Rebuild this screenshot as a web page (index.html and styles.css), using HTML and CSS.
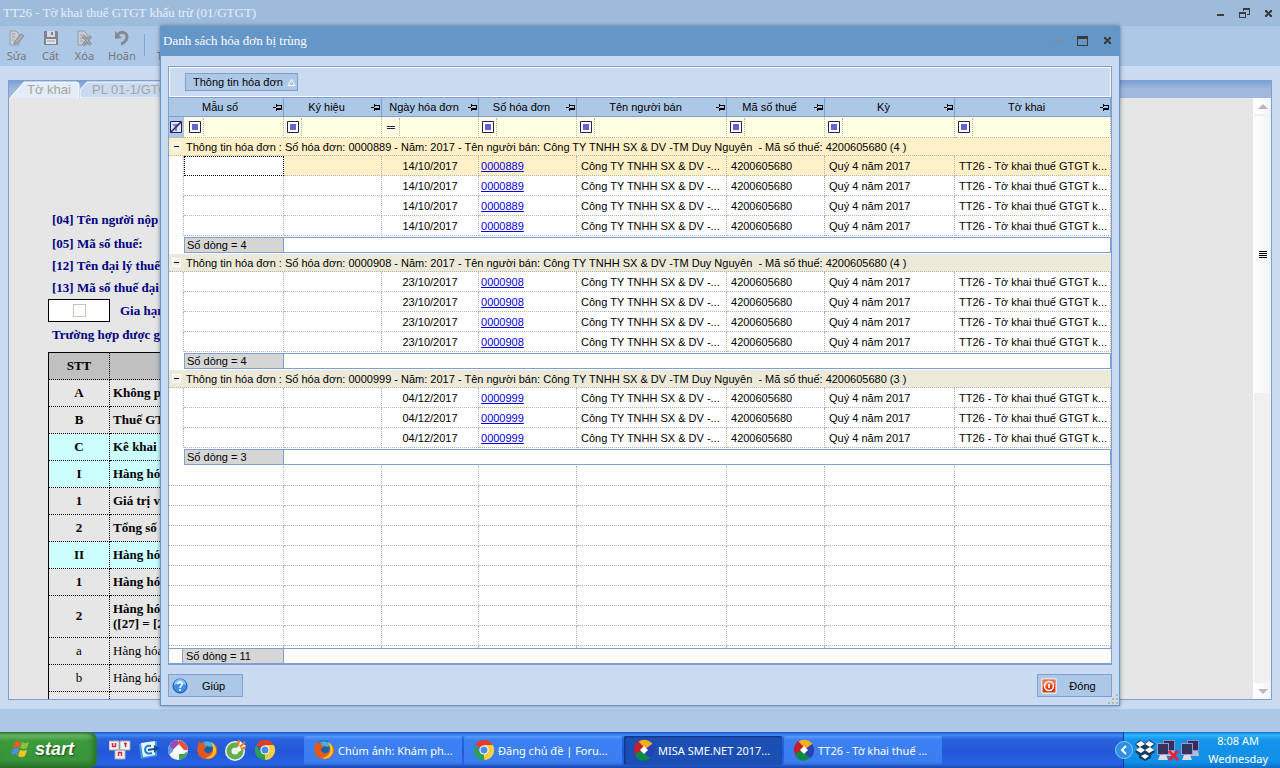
FILE: index.html
```
<!DOCTYPE html>
<html lang="vi">
<head>
    <meta charset="UTF-8">
    <title>TT26 - Tờ khai thuế GTGT khấu trừ (01/GTGT)</title>
    <link rel="stylesheet" href="styles.css">
</head>
<body>

<!-- Biểu tượng dùng chung -->
<svg class="defs" width="0" height="0" aria-hidden="true">
    <symbol id="pin" viewBox="0 0 9 7"><path d="M0 3h4v1H0zM3 0h1v7H3zM4 1h5v5H4zM4 2v2h4V2z" fill-rule="evenodd"/></symbol>
    <symbol id="op" viewBox="0 0 12 12"><path d="M.5.5h11v11H.5z" fill="#fff" stroke="#20205a"/><path d="M3 3h6v6H3z" fill="#6464cc"/></symbol>
    <symbol id="firefox" viewBox="0 0 20 20">
        <circle cx="10" cy="9" r="8.500" fill="#1a5fa8"/>
        <path d="M5 3c2-2 8-3 11 1l-2 3-4-1-2 1z" fill="#3fb4e0"/>
        <path d="M1 5c0-2 1-3 1-4l2 2 4 0-1 2 3 1c0 2-3 1-3 4 1 4 6 4 8 1 2-2 1-5 0-7 2 1 2 2 3 3 0-2-1-3-2-4 5 3 6 9 2 13C13 21 4 20 1 14c-1-3-1-6 0-9z" fill="#e2581e"/>
        <path d="M14 2c6 3 7 11 2 15-3 2-6 2-8 1 5-1 8-4 8-8 0-3-1-6-2-8z" fill="#fbc02d"/>
    </symbol>
    <symbol id="chrome" viewBox="0 0 20 20">
        <path d="M10 10 1.300 5A10 10 0 0 1 18.700 5z" fill="#e33b2e"/>
        <path d="M10 10V5h8.700A10 10 0 0 1 10 20l4.300-7.500z" fill="#fdd23c"/>
        <path d="M10 10 10 20A10 10 0 0 1 1.300 5l4.400 7.500z" fill="#2da14c"/>
        <path d="M10 20 5.700 12.500h8.600z" fill="#2da14c"/>
        <path d="m10 20 4.300-7.500L10 10z" fill="#fdd23c"/>
        <circle cx="10" cy="10" r="4.600" fill="#fff"/><circle cx="10" cy="10" r="3.500" fill="#4a8af4"/>
    </symbol>
    <symbol id="misa" viewBox="0 0 22 22">
        <path d="M11 11 5 3Q12-2 19 4v5z" fill="#f3b01c"/>
        <path d="M11 11 3 17Q-2 9 5 2l5 5z" fill="#c31f2d"/>
        <path d="M11 11l6 8Q9 25 3 18v-4z" fill="#0a8a45"/>
        <path d="M11 11l8-6q5 7-1 14l-5-3z" fill="#2a3fb8"/>
        <path d="m11 7 4 4-4 4-4-4z" fill="#fff"/>
    </symbol>
    <symbol id="net" viewBox="0 0 19 21">
        <path d="M6 0h12v11H6z" fill="#8f8fc0"/><path d="M7 1h10v9H7z" fill="#2f2f5c"/>
        <path d="M9 11h8l1 5H9z" fill="#b9b9d3"/>
        <path d="M0 3h12v12H0z" fill="#9a9ac8"/><path d="M1 4h10v10H1z" fill="#34345f"/>
        <path d="M3 15h6l2 5H1z" fill="#dcdce8"/>
    </symbol>
</svg>

<div class="desktop">

    <!-- Cửa sổ tờ khai -->
    <div class="main-window">
        <div class="title-bar">
            <span class="title">TT26 - Tờ khai thuế GTGT khấu trừ (01/GTGT)</span>
            <div class="window-buttons">
                <button aria-label="Thu nhỏ"><svg width="11" height="11"><path d="M2 6h7v2H2z"/></svg></button>
                <button aria-label="Khôi phục"><svg width="11" height="11"><path d="M4 0h7v7H8V6h2V2H5v1H4zM0 4h7v6H0zM1 6v3h5V6z" fill-rule="evenodd"/></svg></button>
                <button aria-label="Đóng cửa sổ"><svg width="11" height="11"><path d="m3 3 5 5M8 3 3 8" stroke="#3c3c3c" stroke-width="2"/><path d="M2 2h2v2H2zM7 2h2v2H7zM2 7h2v2H2zM7 7h2v2H7z"/></svg></button>
            </div>
        </div>

        <div class="toolbar">
            <button class="tool"><svg width="18" height="18" viewBox="0 0 18 18"><path d="M2 2h6l3 3v11H2z" fill="#c8cdd3" stroke="#969ca3"/><path d="M4 5h3M4 8h3M4 11h2" stroke="#9ba0a7"/><path d="m7 12 6-7 3 2-6 7-4 1z" fill="#a9aeb5" stroke="#868b92"/></svg>Sửa</button>
            <button class="tool"><svg width="18" height="18" viewBox="0 0 18 18"><path d="M2 2h13l1 1v13H2z" fill="#7d8590"/><path d="M5 2h8v6H5z" fill="#d3d9e0"/><path d="M9 3h2v3H9z" fill="#7d8590"/><path d="M4 10h10v5H4z" fill="#dfe3e8"/><path d="M5 12h8" stroke="#9aa0a7"/></svg>Cất</button>
            <button class="tool"><svg width="18" height="18" viewBox="0 0 18 18"><path d="M2 2h6l3 3v11H2z" fill="#c8cdd3" stroke="#969ca3"/><path d="M4 6h4M4 9h4M4 12h3" stroke="#9ba0a7"/><path d="m7 7 8 9M15 7l-8 9" stroke="#858a91" stroke-width="3"/><path d="m7 7 8 9M15 7l-8 9" stroke="#b8bdc4"/></svg>Xóa</button>
            <button class="tool"><svg width="18" height="18" viewBox="0 0 18 18"><path d="M4 6c5-5 10-2 10 2 0 3-3 6-6 7" fill="none" stroke="#858b94" stroke-width="3"/><path d="M2 2v8l7-1z" fill="#858b94"/></svg>Hoãn</button>
            <span class="tool-separator"></span>
            <button class="tool tool-last">Thêm</button>
        </div>

        <div class="document">
            <div class="tabs">
                <a class="tab" href="#to-khai"><svg width="71" height="17" viewBox="0 0 71 17"><path d="M1 17 15 1h52q3 0 3 3v13" fill="#e4ecf8" stroke="#fff"/></svg><span>Tờ khai</span></a>
                <a class="tab" href="#phu-luc"><svg width="110" height="17" viewBox="0 0 110 17"><path d="M0 9 7 1h99q3 0 3 3v13H0z" fill="#c9daf1" stroke="#fff"/></svg><span>PL 01-1/GTGT</span></a>
            </div>
            <div class="page">
                <div class="form" id="to-khai">
                    <p>[04] Tên người nộp</p>
                    <p>[05] Mã số thuế:</p>
                    <p>[12] Tên đại lý thuế</p>
                    <p>[13] Mã số thuế đại</p>
                    <label class="extend"><span class="check-box"><input type="checkbox"></span>Gia hạn</label>
                    <p class="case">Trường hợp được gia</p>
                    <table class="form-table">
                        <tr><th>STT</th><th></th></tr>
                        <tr><td>A</td><td>Không p</td></tr>
                        <tr><td>B</td><td>Thuế GTGT</td></tr>
                        <tr class="section"><td>C</td><td>Kê khai</td></tr>
                        <tr class="section"><td>I</td><td>Hàng hóa</td></tr>
                        <tr><td>1</td><td>Giá trị và</td></tr>
                        <tr><td>2</td><td>Tổng số</td></tr>
                        <tr class="section"><td>II</td><td>Hàng hóa</td></tr>
                        <tr><td>1</td><td>Hàng hóa</td></tr>
                        <tr class="double"><td>2</td><td>Hàng hóa<br>([27] = [29]</td></tr>
                        <tr class="plain"><td>a</td><td>Hàng hóa</td></tr>
                        <tr class="plain"><td>b</td><td>Hàng hóa</td></tr>
                        <tr class="plain"><td></td><td></td></tr>
                    </table>
                </div>
                <div class="scrollbar">
                    <span class="arrow up"></span>
                    <span class="thumb"><i></i></span>
                    <span class="arrow down"></span>
                </div>
            </div>
        </div>
        <div class="status-bar"></div>
    </div>

    <!-- Hộp thoại hóa đơn trùng -->
    <div class="dialog" role="dialog" aria-labelledby="dialogTitle">
        <div class="title-bar">
            <span class="title" id="dialogTitle">Danh sách hóa đơn bị trùng</span>
            <div class="window-buttons">
                <button aria-label="Thu nhỏ" disabled><svg width="11" height="11"><path d="M2 5h7v2H2z"/></svg></button>
                <button aria-label="Phóng to"><svg width="11" height="11"><path d="M0 0h11v10H0zM1 3v6h9V3z" fill-rule="evenodd"/></svg></button>
                <button aria-label="Đóng hộp thoại"><svg width="11" height="11"><path d="m3 2 5 5M8 2 3 7" stroke="#3c3c3c" stroke-width="2"/><path d="M2 1h2v2H2zM7 1h2v2H7zM2 6h2v2H2zM7 6h2v2H7z"/></svg></button>
            </div>
        </div>

        <div class="grid">
            <div class="group-by">
                <button>Thông tin hóa đơn<svg width="9" height="9"><path d="M4.500 1.500 8 7.500H1z" fill="none" stroke="#fff"/></svg></button>
            </div>
            <div class="grid-body">
                <table class="invoices">
                    <colgroup>
                        <col class="w-indent"><col class="w-mau"><col class="w-98"><col class="w-97"><col class="w-98"><col class="w-150"><col class="w-98"><col class="w-130"><col>
                    </colgroup>
                    <thead>
                        <tr class="head">
                            <th colspan="2"><div>Mẫu số<svg width="9" height="7"><use href="#pin"/></svg></div></th>
                            <th><div>Ký hiệu<svg width="9" height="7"><use href="#pin"/></svg></div></th>
                            <th><div>Ngày hóa đơn<svg width="9" height="7"><use href="#pin"/></svg></div></th>
                            <th><div>Số hóa đơn<svg width="9" height="7"><use href="#pin"/></svg></div></th>
                            <th><div>Tên người bán<svg width="9" height="7"><use href="#pin"/></svg></div></th>
                            <th><div>Mã số thuế<svg width="9" height="7"><use href="#pin"/></svg></div></th>
                            <th><div>Kỳ<svg width="9" height="7"><use href="#pin"/></svg></div></th>
                            <th><div>Tờ khai<svg width="9" height="7"><use href="#pin"/></svg></div></th>
                        </tr>
                        <tr class="filter">
                            <td class="clear"><button aria-label="Xóa lọc"><svg width="12" height="12" viewBox="0 0 12 12"><path d="M.5.5h11v11H.5z" fill="#dfe6fa" stroke="#20205a"/><path d="M2 3h8L7 6v4H5V6z" fill="#8080d8"/><path d="M1 11 11 1" stroke="#20205a" stroke-width="1.500"/></svg></button></td>
                            <td><div><button aria-label="Điều kiện lọc"><svg width="12" height="12"><use href="#op"/></svg></button><input type="text" aria-label="Lọc mẫu số"></div></td>
                            <td><div><button aria-label="Điều kiện lọc"><svg width="12" height="12"><use href="#op"/></svg></button><input type="text" aria-label="Lọc ký hiệu"></div></td>
                            <td><div><button aria-label="Điều kiện lọc"><svg width="12" height="12"><path d="M2 5h8v1H2zM2 7h8v1H2z" fill="#20205a"/></svg></button><input type="text" aria-label="Lọc ngày hóa đơn"></div></td>
                            <td><div><button aria-label="Điều kiện lọc"><svg width="12" height="12"><use href="#op"/></svg></button><input type="text" aria-label="Lọc số hóa đơn"></div></td>
                            <td><div><button aria-label="Điều kiện lọc"><svg width="12" height="12"><use href="#op"/></svg></button><input type="text" aria-label="Lọc tên người bán"></div></td>
                            <td><div><button aria-label="Điều kiện lọc"><svg width="12" height="12"><use href="#op"/></svg></button><input type="text" aria-label="Lọc mã số thuế"></div></td>
                            <td><div><button aria-label="Điều kiện lọc"><svg width="12" height="12"><use href="#op"/></svg></button><input type="text" aria-label="Lọc kỳ"></div></td>
                            <td><div><button aria-label="Điều kiện lọc"><svg width="12" height="12"><use href="#op"/></svg></button><input type="text" aria-label="Lọc tờ khai"></div></td>
                        </tr>
                    </thead>
                    <tbody>
                        <tr class="group active"><td colspan="9"><div><button aria-label="Thu gọn nhóm"></button>Thông tin hóa đơn : Số hóa đơn: 0000889 - Năm: 2017 - Tên người bán: Công TY TNHH SX &amp; DV -TM Duy Nguyên  - Mã số thuế: 4200605680 (4 )</div></td></tr>
                        <tr class="active"><td></td><td class="focused"></td><td></td><td>14/10/2017</td><td><a href="#">0000889</a></td><td>Công TY TNHH SX &amp; DV -...</td><td>4200605680</td><td>Quý 4 năm 2017</td><td>TT26 - Tờ khai thuế GTGT k...</td></tr>
                        <tr><td></td><td></td><td></td><td>14/10/2017</td><td><a href="#">0000889</a></td><td>Công TY TNHH SX &amp; DV -...</td><td>4200605680</td><td>Quý 4 năm 2017</td><td>TT26 - Tờ khai thuế GTGT k...</td></tr>
                        <tr><td></td><td></td><td></td><td>14/10/2017</td><td><a href="#">0000889</a></td><td>Công TY TNHH SX &amp; DV -...</td><td>4200605680</td><td>Quý 4 năm 2017</td><td>TT26 - Tờ khai thuế GTGT k...</td></tr>
                        <tr><td></td><td></td><td></td><td>14/10/2017</td><td><a href="#">0000889</a></td><td>Công TY TNHH SX &amp; DV -...</td><td>4200605680</td><td>Quý 4 năm 2017</td><td>TT26 - Tờ khai thuế GTGT k...</td></tr>
                        <tr class="summary"><td></td><td colspan="8"><div><span>Số dòng = 4</span></div></td></tr>
                    </tbody>
                    <tbody>
                        <tr class="group"><td colspan="9"><div><button aria-label="Thu gọn nhóm"></button>Thông tin hóa đơn : Số hóa đơn: 0000908 - Năm: 2017 - Tên người bán: Công TY TNHH SX &amp; DV -TM Duy Nguyên  - Mã số thuế: 4200605680 (4 )</div></td></tr>
                        <tr><td></td><td></td><td></td><td>23/10/2017</td><td><a href="#">0000908</a></td><td>Công TY TNHH SX &amp; DV -...</td><td>4200605680</td><td>Quý 4 năm 2017</td><td>TT26 - Tờ khai thuế GTGT k...</td></tr>
                        <tr><td></td><td></td><td></td><td>23/10/2017</td><td><a href="#">0000908</a></td><td>Công TY TNHH SX &amp; DV -...</td><td>4200605680</td><td>Quý 4 năm 2017</td><td>TT26 - Tờ khai thuế GTGT k...</td></tr>
                        <tr><td></td><td></td><td></td><td>23/10/2017</td><td><a href="#">0000908</a></td><td>Công TY TNHH SX &amp; DV -...</td><td>4200605680</td><td>Quý 4 năm 2017</td><td>TT26 - Tờ khai thuế GTGT k...</td></tr>
                        <tr><td></td><td></td><td></td><td>23/10/2017</td><td><a href="#">0000908</a></td><td>Công TY TNHH SX &amp; DV -...</td><td>4200605680</td><td>Quý 4 năm 2017</td><td>TT26 - Tờ khai thuế GTGT k...</td></tr>
                        <tr class="summary"><td></td><td colspan="8"><div><span>Số dòng = 4</span></div></td></tr>
                    </tbody>
                    <tbody>
                        <tr class="group"><td colspan="9"><div><button aria-label="Thu gọn nhóm"></button>Thông tin hóa đơn : Số hóa đơn: 0000999 - Năm: 2017 - Tên người bán: Công TY TNHH SX &amp; DV -TM Duy Nguyên  - Mã số thuế: 4200605680 (3 )</div></td></tr>
                        <tr><td></td><td></td><td></td><td>04/12/2017</td><td><a href="#">0000999</a></td><td>Công TY TNHH SX &amp; DV -...</td><td>4200605680</td><td>Quý 4 năm 2017</td><td>TT26 - Tờ khai thuế GTGT k...</td></tr>
                        <tr><td></td><td></td><td></td><td>04/12/2017</td><td><a href="#">0000999</a></td><td>Công TY TNHH SX &amp; DV -...</td><td>4200605680</td><td>Quý 4 năm 2017</td><td>TT26 - Tờ khai thuế GTGT k...</td></tr>
                        <tr><td></td><td></td><td></td><td>04/12/2017</td><td><a href="#">0000999</a></td><td>Công TY TNHH SX &amp; DV -...</td><td>4200605680</td><td>Quý 4 năm 2017</td><td>TT26 - Tờ khai thuế GTGT k...</td></tr>
                        <tr class="summary"><td></td><td colspan="8"><div><span>Số dòng = 3</span></div></td></tr>
                    </tbody>
                    <!-- Các dòng trống -->
                    <tbody class="empty">
                        <tr><td colspan="2"></td><td></td><td></td><td></td><td></td><td></td><td></td><td></td></tr>
                        <tr><td colspan="2"></td><td></td><td></td><td></td><td></td><td></td><td></td><td></td></tr>
                        <tr><td colspan="2"></td><td></td><td></td><td></td><td></td><td></td><td></td><td></td></tr>
                        <tr><td colspan="2"></td><td></td><td></td><td></td><td></td><td></td><td></td><td></td></tr>
                        <tr><td colspan="2"></td><td></td><td></td><td></td><td></td><td></td><td></td><td></td></tr>
                        <tr><td colspan="2"></td><td></td><td></td><td></td><td></td><td></td><td></td><td></td></tr>
                        <tr><td colspan="2"></td><td></td><td></td><td></td><td></td><td></td><td></td><td></td></tr>
                        <tr><td colspan="2"></td><td></td><td></td><td></td><td></td><td></td><td></td><td></td></tr>
                        <tr><td colspan="2"></td><td></td><td></td><td></td><td></td><td></td><td></td><td></td></tr>
                        <tr><td colspan="2"></td><td></td><td></td><td></td><td></td><td></td><td></td><td></td></tr>
                    </tbody>
                </table>
            </div>
            <div class="total"><span>Số dòng = 11</span></div>
        </div>

        <div class="actions">
            <button><svg width="16" height="16" viewBox="0 0 16 16"><circle cx="8" cy="8" r="7" fill="#3d8fe8" stroke="#0f4fa8"/><path d="M2 7a6 6 0 0 1 12 0q-6-2-12 0z" fill="#8fc4fa"/><path d="M6 6q0-2 2-2t2 2q0 1-1 2t-1 2M8 11v2" fill="none" stroke="#fff" stroke-width="1.600"/></svg><span>Giúp</span></button>
            <button><svg width="16" height="16" viewBox="0 0 16 16"><path d="M1 1h14v14H1z" fill="#d83c12" stroke="#fff"/><path d="M2 2h12v4L2 9z" fill="#ee7350"/><circle cx="8" cy="8" r="4.500" fill="none" stroke="#fff" stroke-width="1.500"/><path d="M8 6v4" stroke="#fff" stroke-width="1.600"/></svg><span>Đóng</span></button>
        </div>
        <svg class="grip" width="11" height="11"><path d="M8 0h2v2H8zM4 4h2v2H4zM8 4h2v2H8zM0 8h2v2H0zM4 8h2v2H4zM8 8h2v2H8z"/></svg>
    </div>
</div>

<!-- Thanh tác vụ -->
<div class="taskbar">
    <button class="start">
        <svg width="20" height="18" viewBox="0 0 20 18"><path d="M4 2q3-2 6 0L8 8Q5 6 2 8z" fill="#f0582a"/><path d="M11 2q3 2 7 0l-2 6q-3 2-7 0z" fill="#86c440"/><path d="M2 9q3-2 6 0l-2 6q-3-2-6 0z" fill="#4f8df0"/><path d="M9 10q3 1 7 0l-2 6q-4 2-7 0z" fill="#fbc51f"/></svg>
        start
    </button>
    <div class="quick-launch">
        <a href="#" aria-label="UniKey"><svg width="22" height="20" viewBox="0 0 22 20"><path d="M0 1h10v9H0zM11 1h10v9H11zM6 10h10v9H6z" fill="#f4f4f4" stroke="#a6a6ae"/><path d="M3.500 3v3.500h3V3M15 3.500h3M16.500 3.500V7M9.500 16v-3.500h3V16" fill="none" stroke="#d3243a" stroke-width="1.500"/></svg></a>
        <a href="#" aria-label="Outlook"><svg width="22" height="20" viewBox="0 0 22 20"><path d="M1 4 19 1v15L3 19z" fill="#3f9be6"/><path d="m3 3 14-2v14L5 17z" fill="#eaf4fd"/><path d="M13 6q-6-1-6 4 1 5 7 3" fill="none" stroke="#1d7fd0" stroke-width="2"/><path d="m10 9 6-1V5l5 3-5 5v-3l-6 1z" fill="#174f96"/></svg></a>
        <a href="#" aria-label="Picasa"><svg width="22" height="20" viewBox="0 0 22 20"><circle cx="11" cy="10" r="10" fill="#f5f5f5"/><path d="M11 0a10 10 0 0 0-9 6l4 4 6-6z" fill="#9b4bb8"/><path d="M2 6a10 10 0 0 0 0 9l4-4V9z" fill="#5b9be0"/><path d="M12 0q8 2 9 10h-4l-6-7z" fill="#e8503a"/><path d="M21 11q-2 8-9 9v-6h5z" fill="#3aa64c"/><path d="m11 5 5 5v4H6v-4z" fill="#fff"/></svg></a>
        <a href="#" aria-label="Firefox"><svg width="22" height="20"><use href="#firefox"/></svg></a>
        <a href="#" aria-label="Cốc Cốc"><svg width="22" height="22" viewBox="0 0 22 22"><circle cx="10" cy="12" r="10" fill="#e8f5e2"/><circle cx="10" cy="12" r="6" fill="none" stroke="#65ab52" stroke-width="5"/><path d="m11 11 4-9 6 5-7 6z" fill="#f3faef"/><path d="m13 7 1-6M15 8l5-5M16 10l5-2" stroke="#ee7a2b" stroke-width="2"/></svg></a>
        <a href="#" aria-label="Chrome"><svg width="22" height="20"><use href="#chrome"/></svg></a>
    </div>
    <div class="tasks">
        <button><svg width="22" height="20"><use href="#firefox"/></svg><span>Chùm ảnh: Khám ph...</span></button>
        <button><svg width="22" height="20"><use href="#chrome"/></svg><span>Đăng chủ đề | Foru...</span></button>
        <button class="current"><svg width="22" height="22"><use href="#misa"/></svg><span>MISA SME.NET 2017...</span></button>
        <button><svg width="22" height="22"><use href="#misa"/></svg><span>TT26 - Tờ khai thuế ...</span></button>
    </div>
    <div class="tray">
        <button class="tray-toggle" aria-label="Hiện biểu tượng ẩn"><svg width="18" height="18" viewBox="0 0 18 18"><circle cx="9" cy="9" r="8.500" fill="#2f8fe6" stroke="#8cc8f8"/><path d="m11 5-4 4 4 4" fill="none" stroke="#fff" stroke-width="2"/></svg></button>
        <svg width="20" height="21" viewBox="0 0 20 21"><path d="m5 0 5 3 5-3 5 4-3 4 3 4-4 3v3l-6 3-6-3v-3l-4-3 3-4-3-4z" fill="#123e63"/><path d="m6 1 4 3-5 3-4-3zM14 1l5 3-4 3-5-3zM5 7l5 3-4 3-5-3zM15 7l4 3-5 3-4-3zM10 14l4 2-4 3-4-3z" fill="#fff"/></svg>
        <svg width="22" height="21"><svg width="19" height="21"><use href="#net"/></svg><path d="m12 11 9 9M21 11l-9 9" stroke="#e8232e" stroke-width="3"/></svg>
        <svg width="19" height="21"><use href="#net"/></svg>
        <div class="clock"><span>8:08 AM</span><span>Wednesday</span></div>
    </div>
</div>

</body>
</html>
```
FILE: styles.css
```
* {
    box-sizing: border-box;
}
body {
    margin: 0;
    height: 100vh;
    display: flex;
    flex-direction: column;
    overflow: hidden;
    font-family: "Liberation Sans", Arial, sans-serif;
    font-size: 11px;
    color: #000;
}
button, input {
    font: inherit;
    color: inherit;
    margin: 0;
    padding: 0;
    border: none;
    background: none;
}
svg {
    display: block;
    flex: none;
}
p {
    margin: 0;
}
.defs {
    position: absolute;
}
.desktop {
    flex: 1;
    min-height: 0;
    position: relative;
    display: flex;
}

/* Cửa sổ chính */
.main-window {
    flex: 1;
    min-width: 0;
    display: flex;
    flex-direction: column;
    background: #cadbf1;
}
.title-bar {
    display: flex;
    justify-content: space-between;
    align-items: center;
    height: 26px;
    padding: 0 6px 0 3px;
    background: #9dbbdb;
    color: #e6effa;
    font-family: "Liberation Serif", "Times New Roman", serif;
    font-size: 13px;
}
.window-buttons {
    display: flex;
    gap: 13px;
}
.window-buttons button {
    fill: #3c3c3c;
}
.window-buttons button:disabled {
    fill: #8a8a8a;
}
.toolbar {
    display: flex;
    height: 40px;
    padding: 3px 0 0 6px;
    background: #adc8e7;
}
.tool {
    display: flex;
    flex-direction: column;
    align-items: center;
    min-width: 21px;
    margin-right: 13px;
    color: #777;
    font-family: "Noto Sans", Tahoma, sans-serif;
    line-height: 17px;
}
.tool-last {
    justify-content: flex-end;
    padding-bottom: 2px;
}
.tool-separator {
    width: 1px;
    height: 22px;
    margin: 5px 12px 0 -5px;
    background: #7fa6d6;
}
.document {
    flex: 1;
    min-height: 0;
    display: flex;
    flex-direction: column;
    margin: 14px 8px 9px;
    border: 1px solid #7ca0d0;
}
.tabs {
    display: flex;
    height: 17px;
    background: linear-gradient(#7ca0d0, #a0b8de 8px);
}
.tab {
    display: grid;
    color: #a5a5a0;
    font-size: 13px;
    line-height: 17px;
    text-decoration: none;
}
.tab svg, .tab span {
    grid-area: 1 / 1;
}
.tab span {
    padding-left: 18px;
}
.tab + .tab span {
    padding-left: 12px;
}
.page {
    flex: 1;
    min-height: 0;
    display: flex;
    background: #e6e6e6;
}
.form {
    flex: 1;
    padding: 109px 160px 0 39px;
    overflow: hidden;
    color: #000080;
    font-family: "Liberation Serif", "Times New Roman", serif;
    font-size: 13px;
    font-weight: bold;
}
.form p {
    padding-left: 4px;
    line-height: 22px;
}
.form p:first-child {
    line-height: 26px;
}
.extend {
    display: flex;
    align-items: center;
    gap: 10px;
}
.check-box {
    width: 62px;
    height: 23px;
    display: flex;
    align-items: center;
    justify-content: center;
    border: 1px solid #000;
    background: #fff;
}
.check-box input {
    appearance: none;
    width: 13px;
    height: 13px;
    border: 1px solid #c8c5b4;
}
.form .case {
    line-height: 26px;
    margin-bottom: 4px;
}
.form-table {
    width: 100%;
    table-layout: fixed;
    border-collapse: separate;
    border-spacing: 0;
    border: 1px solid #000;
    border-bottom: none;
    color: #000;
}
.form-table td, .form-table th {
    height: 27px;
    padding: 0 3px 2px;
    border-right: 1px dotted #000;
    border-bottom: 1px dotted #000;
    line-height: 15px;
}
.form-table th {
    background: #c0c0c0;
}
.form-table th:first-child {
    width: 61px;
}
.form-table td:first-child {
    text-align: center;
}
.form-table .section td {
    background: #cff;
}
.form-table .double td {
    height: 42px;
}
.plain td {
    font-weight: normal;
}
.scrollbar {
    width: 18px;
    display: flex;
    flex-direction: column;
    align-items: center;
    border-left: 1px solid #fff;
    background: #f0f0f0;
}
.arrow {
    align-self: stretch;
    height: 16px;
    display: flex;
    align-items: center;
    justify-content: center;
    background: linear-gradient(to right, #fff, #f0f3fb);
}
.arrow::before {
    content: "";
    border: 5px solid transparent;
}
.up::before {
    border-top: none;
    border-bottom-color: #b8b8b8;
}
.down {
    margin-top: auto;
}
.down::before {
    border-bottom: none;
    border-top-color: #b8b8b8;
}
.thumb {
    align-self: stretch;
    height: 279px;
    display: flex;
    align-items: center;
    justify-content: center;
    border-top: 2px solid #f0f0f0;
    background: linear-gradient(to right, #fff, #eff2fa);
}
.thumb i {
    width: 8px;
    height: 7px;
    background: repeating-linear-gradient(#000 0 1px, #fff 1px 2px);
}
.status-bar {
    height: 23px;
    background: #adc8e7;
}

/* Hộp thoại */
.dialog {
    position: absolute;
    top: 26px;
    left: 160px;
    right: 160px;
    bottom: 26px;
    display: flex;
    flex-direction: column;
    border: 1px solid #6496c8;
    border-top: none;
    background: #cadbf1;
    box-shadow: 0 0 4px rgba(40, 60, 90, 0.6);
}
.dialog .title-bar {
    height: 30px;
    padding: 0 6px 0 2px;
    background: #6496c8;
    color: #fff;
}
.dialog .window-buttons {
    gap: 14px;
}
.grid {
    flex: 1;
    min-height: 0;
    display: flex;
    flex-direction: column;
    margin: 10px 7px 0;
    border: 1px solid #7ca0d0;
    border-bottom-width: 2px;
    background: #fff;
}
.group-by {
    padding: 5px 15px;
    border: 1px solid #fff;
    background: #cadbf1;
}
.group-by button {
    display: flex;
    align-items: center;
    gap: 4px;
    height: 18px;
    padding: 0 1px 0 7px;
    border: 1px solid #7ca0d0;
    background: #adc8e7;
}
.grid-body {
    flex: 1;
    min-height: 0;
    overflow: hidden;
}
.invoices {
    width: 100%;
    table-layout: fixed;
    border-spacing: 0;
}
.w-indent { width: 15px; }
.w-mau { width: 100px; }
.w-97 { width: 97px; }
.w-98 { width: 98px; }
.w-130 { width: 130px; }
.w-150 { width: 150px; }
.head th {
    height: 20px;
    padding: 0;
    border: 1px solid #7ca0d0;
    border-left: none;
    background: #adc8e7;
    font-weight: normal;
}
.head div {
    position: relative;
    display: flex;
    align-items: center;
    justify-content: center;
    padding-right: 12px;
}
.head svg {
    position: absolute;
    right: 1px;
}
.filter td {
    height: 21px;
    padding: 0 0 1px;
    border-right: 1px dotted #b4b4b4;
    border-bottom: 1px dotted #b4b4b4;
    background: #ffffe1;
}
.filter div {
    display: flex;
    align-items: center;
}
.filter button {
    padding: 0 2px 0 3px;
}
.filter td:nth-child(2) button {
    padding-left: 5px;
}
.filter input {
    flex: 1;
    min-width: 0;
    height: 18px;
    border-left: 1px dotted #b4b4b4;
}
.filter .clear {
    background: #adc8e7;
}
.filter .clear button {
    display: block;
    padding: 0 0 0 1px;
}
.invoices tbody td {
    height: 20px;
    padding: 0 0 0 4px;
    border-right: 1px dotted #b4b4b4;
    border-bottom: 1px dotted #b4b4b4;
    white-space: nowrap;
}
.invoices tbody td:first-child {
    border-bottom: none;
}
.invoices tbody td:nth-child(4) {
    padding: 0;
    text-align: center;
}
.invoices tbody td:nth-child(5) {
    padding-left: 2px;
}
.invoices a {
    color: #0000e6;
}
.invoices tbody .active td + td {
    background: #fff0c8;
}
.invoices tbody .active .focused {
    border: 1px dotted #000;
    background: #fff;
}
.invoices tbody .group td {
    height: 18px;
    padding: 0;
    border-right: none;
    border-bottom: 1px dotted #b4b4b4;
    background: #ece9d8;
}
.invoices tbody .group.active td {
    background: #fff0c8;
}
.group div {
    display: flex;
    align-items: center;
    gap: 5px;
    padding-left: 3px;
    white-space: pre;
}
.group button {
    width: 9px;
    height: 9px;
    border: 1px solid #fff;
    background: linear-gradient(#000, #000) center / 5px 1px no-repeat #f4f1e4;
}
.invoices tbody .summary td {
    height: 18px;
    padding: 1px 0;
    border: none;
}
.summary div {
    display: flex;
    border: 1px solid #7ca0d0;
}
.summary span, .total span {
    width: 99px;
    padding-left: 2px;
    border-right: 1px solid #7ca0d0;
    background: #d6d6d6;
    line-height: 14px;
}
.invoices .empty tr td:first-child {
    border-bottom: 1px dotted #b4b4b4;
}
.total {
    display: flex;
    padding-left: 13px;
    border-top: 1px solid #7ca0d0;
}
.total span {
    width: 102px;
    padding-left: 3px;
    border-left: 1px solid #7ca0d0;
}
.actions {
    display: flex;
    justify-content: space-between;
    padding: 9px 7px 8px;
}
.actions button {
    display: flex;
    align-items: center;
    width: 75px;
    height: 23px;
    padding: 0 3px;
    border: 1px solid #7ca0d0;
    background: #adc8e7;
}
.actions span {
    flex: 1;
    text-align: center;
}
.grip {
    position: absolute;
    right: 0;
    bottom: 0;
    fill: #b4b4a8;
}

/* Thanh tác vụ */
.taskbar {
    display: flex;
    height: 36px;
    background: linear-gradient(#1c55c4 0, #3f8cf3 3px, #2a62dd 7px, #2258d8 20px, #2863e4 32px, #1b46a8);
    color: #fff;
    font-family: "Noto Sans", Tahoma, sans-serif;
}
.start {
    display: flex;
    align-items: center;
    gap: 4px;
    width: 97px;
    padding: 0 0 2px 11px;
    border-radius: 0 8px 8px 0;
    background: linear-gradient(#2c7a2c 0, #6cb86a 3px, #3c9a3c 9px, #3a943a 28px, #2a702a);
    box-shadow: inset -4px 0 5px #2a742a;
    font-family: "Liberation Sans", Arial, sans-serif;
    font-size: 18px;
    font-weight: bold;
    font-style: italic;
    text-shadow: 1px 1px 2px #1a4a1a;
}
.quick-launch {
    display: flex;
    align-items: center;
    gap: 7px;
    padding: 0 28px 0 12px;
}
.tasks {
    flex: 1;
    display: flex;
    gap: 2px;
    padding: 4px 0 3px;
}
.tasks button {
    display: flex;
    align-items: center;
    gap: 3px;
    flex: 0 1 158px;
    padding: 0 9px 1px;
    border-radius: 2px;
    background: linear-gradient(#5a9bff, #3c81f3 4px, #3a7df0 26px, #2f6bd8);
    white-space: nowrap;
}
.tasks .current {
    background: #1c4fb4;
    box-shadow: inset 1px 1px 2px #0c2f7c;
}
.tray {
    display: flex;
    align-items: center;
    gap: 2px;
    margin-left: auto;
    padding-right: 12px;
    border-left: 1px solid #0c3c94;
    background: linear-gradient(#0f74d4 0, #2fb4f8 3px, #1494ea 8px, #118fe8 30px, #0d6cc4);
}
.tray-toggle {
    margin-left: -9px;
}
.clock {
    display: flex;
    flex-direction: column;
    align-items: center;
    margin-left: 6px;
    line-height: 18px;
}
```
